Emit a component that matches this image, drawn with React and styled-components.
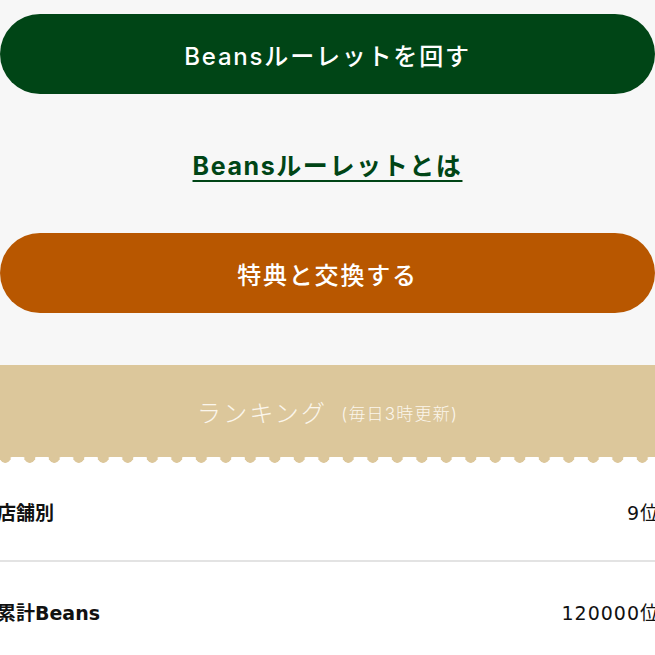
import React from 'react'
import styled, { createGlobalStyle } from 'styled-components'

const GlobalStyle = createGlobalStyle`
  html, body {
    margin: 0;
    padding: 0;
    background: #ffffff;
    overflow: hidden;
  }
  body {
    font-family: Inter, "Noto Sans CJK JP", sans-serif;
  }
`

const Page = styled.div`
  width: 655px;
`

const ActionArea = styled.div`
  background: #f7f7f7;
  padding: 14px 0 52px;
  display: flex;
  flex-direction: column;
`

const PillButton = styled.button`
  height: 80px;
  width: 100%;
  border: none;
  border-radius: 40px;
  background: ${props => props.color};
  color: #ffffff;
  font-family: Inter, "Noto Sans CJK JP", sans-serif;
  font-size: 24px;
  font-weight: 500;
  letter-spacing: 1.8px;
  cursor: pointer;
`

const LinkRow = styled.div`
  height: 139px;
  display: flex;
  align-items: center;
  justify-content: center;
`

const HelpLink = styled.a`
  color: #004516;
  font-family: Inter, "Noto Sans CJK JP", sans-serif;
  font-size: 25px;
  font-weight: 700;
  letter-spacing: 1.6px;
  text-decoration: underline;
  text-decoration-thickness: 2px;
  text-underline-offset: 5px;
`

const RankingHeader = styled.div`
  position: relative;
  height: 92px;
  background: #dcc79b;
  display: flex;
  align-items: center;
  justify-content: center;
  gap: 14px;
  color: #fbf6ec;

  &::after {
    content: '';
    position: absolute;
    left: 0;
    right: 0;
    top: 100%;
    height: 6px;
    background-image: radial-gradient(circle at 50% 0, #dcc79b 5.5px, transparent 6px);
    background-size: 24.5px 6px;
    background-position: -7px 0;
    background-repeat: repeat-x;
  }
`

const RankingTitle = styled.span`
  font-family: "Noto Sans CJK JP", sans-serif;
  font-size: 24px;
  font-weight: 300;
  letter-spacing: 2.2px;
`

const RankingNote = styled.span`
  font-family: Inter, "Noto Sans CJK JP", sans-serif;
  font-size: 17px;
  font-weight: 300;
  letter-spacing: 1.2px;
  padding-top: 3px;
`

const RankList = styled.div`
  margin: 5px -5px 0 -3px;
`

const RankRow = styled.div`
  height: 98px;
  display: flex;
  align-items: center;
  justify-content: space-between;
  border-bottom: ${props => (props.last ? 'none' : '2px solid #e3e3e3')};
  font-family: "DejaVu Sans", "Noto Sans CJK JP", sans-serif;
  font-size: 19px;
  color: #111111;
`

const RankLabel = styled.span`
  font-weight: 700;
`

const RankValue = styled.span`
  font-weight: 400;
  letter-spacing: 1px;
`

const rankings = [
  { label: '店舗別', value: '9位' },
  { label: '累計Beans', value: '120000位' },
]

const App = () => {
  return (
    <Page>
      <GlobalStyle />
      <ActionArea>
        <PillButton color="#004516">Beansルーレットを回す</PillButton>
        <LinkRow>
          <HelpLink href="#">Beansルーレットとは</HelpLink>
        </LinkRow>
        <PillButton color="#b85700">特典と交換する</PillButton>
      </ActionArea>
      <RankingHeader>
        <RankingTitle>ランキング</RankingTitle>
        <RankingNote>(毎日3時更新)</RankingNote>
      </RankingHeader>
      <RankList>
        {rankings.map((r, i) => (
          <RankRow key={r.label} last={i === rankings.length - 1}>
            <RankLabel>{r.label}</RankLabel>
            <RankValue>{r.value}</RankValue>
          </RankRow>
        ))}
      </RankList>
    </Page>
  )
}

export default App
